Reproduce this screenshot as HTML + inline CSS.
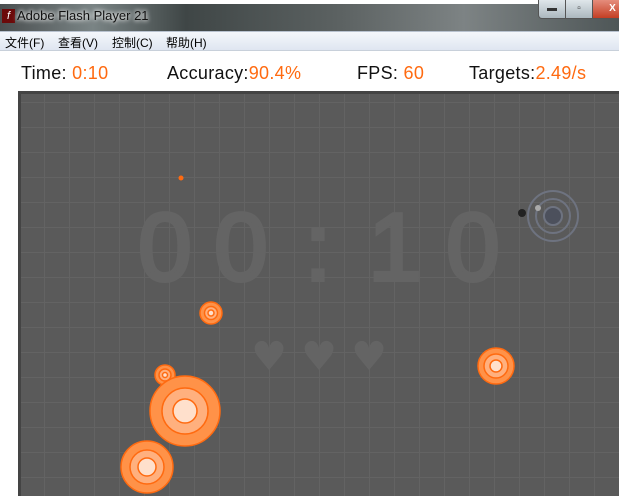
<!DOCTYPE html>
<html><head><meta charset="utf-8"><style>
*{margin:0;padding:0;box-sizing:border-box}
body{width:619px;height:496px;overflow:hidden;background:#fff;position:relative;font-family:"Liberation Sans","Noto Sans CJK SC",sans-serif}
.title{position:absolute;left:0;top:4px;width:619px;height:27px;background:linear-gradient(90deg,#4a4f50 0%,#7a8485 15%,#3f4646 30%,#5c6262 55%,#7d8384 75%,#4e5657 100%)}
.title .ic{position:absolute;left:2px;top:5px;width:13px;height:14px;background:#6b0a0a;color:#fff;font-size:11px;font-style:italic;text-align:center;line-height:14px}
.title .t{position:absolute;left:17px;top:4px;font-size:13px;color:#111;text-shadow:0 0 6px #fff,0 0 4px #fff}
.btns{position:absolute;left:538px;top:0;height:19px;display:flex;border:1px solid #555;border-top:none;border-radius:0 0 4px 4px;overflow:hidden}
.btns div{width:27px;height:19px;background:linear-gradient(#dfe6ea,#a9b5bc);border-right:1px solid #555;color:#333;font-size:10px;text-align:center;line-height:17px}
.btns .x{background:linear-gradient(#e58d7c,#c23a1f);width:40px;color:#fff;font-weight:bold}
.menu{position:absolute;left:0;top:31px;width:619px;height:20px;background:linear-gradient(#f4f7fb,#dfe6f1);border-top:1px solid #b8c2cf;border-bottom:1px solid #c8d0da;font-size:12px;color:#000}
.menu span{position:absolute;top:2px}
.hud{position:absolute;top:63px;font-size:18px;color:#111;letter-spacing:0.3px}
.hud b{font-weight:normal;color:#ff6a10}
</style></head><body>
<div class="title"><div class="ic">f</div><div class="t">Adobe Flash Player 21</div></div>
<div class="btns"><div>▬</div><div>▫</div><div class="x">X</div></div>
<div class="menu"><span style="left:5px">文件(F)</span><span style="left:58px">查看(V)</span><span style="left:112px">控制(C)</span><span style="left:166px">帮助(H)</span></div>
<div class="hud" style="left:21px">Time: <b>0:10</b></div>
<div class="hud" style="left:167px">Accuracy:<b>90.4%</b></div>
<div class="hud" style="left:357px">FPS: <b>60</b></div>
<div class="hud" style="left:469px">Targets:<b>2.49/s</b></div>
<svg style="position:absolute;left:18px;top:91px" width="601" height="405" viewBox="18 91 601 405">
<defs><pattern id="g" x="19" y="2" width="25" height="25" patternUnits="userSpaceOnUse"><path d="M0.5 0V25M0 0.5H25" stroke="#636363" stroke-width="1" fill="none"/></pattern></defs>
<rect x="18" y="91" width="601" height="405" fill="#5a5a5a"/>
<rect x="18" y="91" width="601" height="405" fill="url(#g)"/>
<rect x="18" y="91" width="3" height="405" fill="#444"/>
<rect x="18" y="91" width="601" height="3" fill="#444"/>
<g font-family="Liberation Sans,sans-serif" font-size="96" fill="#646464" text-anchor="middle" stroke="#646464" stroke-width="4">
<text x="165" y="280">0</text><text x="241" y="280">0</text><text x="318" y="280">:</text><text x="395" y="280">1</text><text x="473" y="280">0</text></g>
<g fill="#646464" font-size="40" font-family="DejaVu Sans,sans-serif" text-anchor="middle"><text x="269" y="370">♥</text><text x="319" y="370">♥</text><text x="369" y="370">♥</text></g>
<circle cx="181" cy="178" r="2.5" fill="#ff6a10"/>
<circle cx="522" cy="213" r="4" fill="#222"/>
<g fill="none" stroke="#6e7380" stroke-width="2"><circle cx="553" cy="216" r="25"/><circle cx="553" cy="216" r="17"/></g>
<circle cx="553" cy="216" r="9" fill="#4c505c" stroke="#6e7380" stroke-width="2"/>
<circle cx="538" cy="208" r="3" fill="#aaa"/>
<g stroke="#ff6a10" stroke-width="1.5">
<circle cx="211" cy="313" r="11" fill="#ff9248"/><circle cx="211" cy="313" r="6.5" fill="#ffb07e"/><circle cx="211" cy="313" r="3" fill="#ffe0cc"/>
<circle cx="496" cy="366" r="18" fill="#ff9248"/><circle cx="496" cy="366" r="12" fill="#ffb07e"/><circle cx="496" cy="366" r="6" fill="#ffe0cc"/>
<circle cx="165" cy="375" r="10" fill="#ff9248"/><circle cx="165" cy="375" r="6" fill="#ffb07e"/><circle cx="165" cy="375" r="2.5" fill="#ffe0cc"/>
<circle cx="185" cy="411" r="35" fill="#ff9248"/><circle cx="185" cy="411" r="23" fill="#ffb07e"/><circle cx="185" cy="411" r="12" fill="#ffe0cc"/>
<circle cx="147" cy="467" r="26" fill="#ff9248"/><circle cx="147" cy="467" r="17" fill="#ffb07e"/><circle cx="147" cy="467" r="9" fill="#ffe0cc"/>
</g>
</svg>
</body></html>
